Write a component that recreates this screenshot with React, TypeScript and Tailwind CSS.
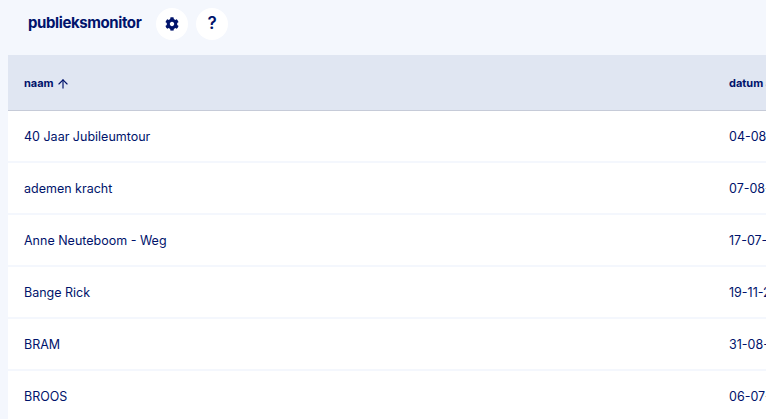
import { ArrowUp } from "lucide-react";

const rows = [
  ["40 Jaar Jubileumtour", "04-08-2023"],
  ["ademen kracht", "07-08-2023"],
  ["Anne Neuteboom - Weg", "17-07-2023"],
  ["Bange Rick", "19-11-2023"],
  ["BRAM", "31-08-2023"],
  ["BROOS", "06-07-2023"],
];

function Gear() {
  return (
    <svg width="14" height="14" viewBox="0 0 512 512" fill="#00136b">
      <path d="M487.4 315.7l-42.6-24.6c4.3-23.2 4.3-47 0-70.2l42.6-24.6c4.9-2.8 7.1-8.6 5.5-14-11.1-35.6-30-67.8-54.7-94.6-3.8-4.1-10-5.1-14.8-2.3L380.8 110c-17.9-15.4-38.5-27.3-60.8-35.1V25.8c0-5.6-3.9-10.5-9.4-11.7-36.7-8.2-74.3-7.8-109.2 0-5.5 1.2-9.4 6.1-9.4 11.7V75c-22.2 7.9-42.8 19.8-60.8 35.1L88.7 85.5c-4.9-2.8-11-1.9-14.8 2.3-24.7 26.7-43.6 58.9-54.7 94.6-1.7 5.4.6 11.2 5.5 14L67.3 221c-4.3 23.2-4.3 47 0 70.2l-42.6 24.6c-4.9 2.8-7.1 8.6-5.5 14 11.1 35.6 30 67.8 54.7 94.6 3.8 4.1 10 5.1 14.8 2.3l42.6-24.6c17.9 15.4 38.5 27.3 60.8 35.1v49.2c0 5.6 3.9 10.5 9.4 11.7 36.7 8.2 74.3 7.8 109.2 0 5.5-1.2 9.4-6.1 9.4-11.7v-49.2c22.2-7.9 42.8-19.8 60.8-35.1l42.6 24.6c4.9 2.8 11 1.9 14.8-2.3 24.7-26.7 43.6-58.9 54.7-94.6 1.5-5.5-.7-11.3-5.6-14.1zM256 336c-44.1 0-80-35.9-80-80s35.9-80 80-80 80 35.9 80 80-35.9 80-80 80z" />
    </svg>
  );
}

export default function App() {
  return (
    <div className="h-[419px] w-[766px] overflow-hidden bg-[#f4f7fd] font-['Inter',sans-serif] text-[#00136b]">
      <header className="flex h-[55px] items-start pl-7 pt-2">
        <h1 className="mt-[6px] w-[128px] text-[15px] leading-[18px] font-bold tracking-[-0.4px]">publieksmonitor</h1>
        <div className="flex gap-2">
          <button className="flex h-8 w-8 items-center justify-center rounded-full bg-white"><Gear /></button>
          <button className="flex h-8 w-8 items-center justify-center rounded-full bg-white text-[17px] font-semibold">?</button>
        </div>
      </header>
      <div className="ml-2 w-[900px]">
        <div className="flex h-[56px] items-center border-b border-[#c6cbd8] bg-[#e0e6f2] pl-4 pt-0.5 text-[11px] font-bold">
          <div className="flex w-[705px] items-center gap-0.5">naam <ArrowUp size={14} strokeWidth={2} /></div>
          <div>datum aanvang</div>
        </div>
        {rows.map(([name, date]) => (
          <div key={name} className="flex h-[52px] items-center border-b-2 border-[#f4f7fd] bg-white pl-4 pt-0.5 text-[12.5px]">
            <div className="w-[705px]">{name}</div>
            <div>{date}</div>
          </div>
        ))}
      </div>
    </div>
  );
}
